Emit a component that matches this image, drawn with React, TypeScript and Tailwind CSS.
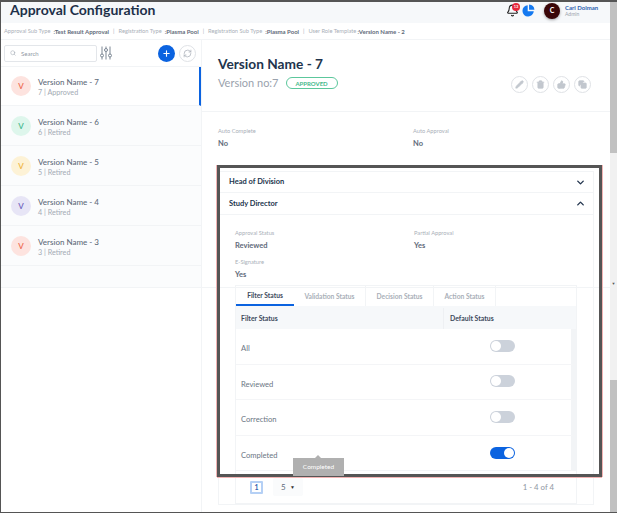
import React from 'react';
import { Search, Plus, RefreshCw, Pencil, Trash2, ThumbsUp, Copy, ChevronDown, ChevronUp, Bell } from 'lucide-react';

const versions = [
    { name: 'Version Name - 7', sub: '7 | Approved', circle: 'bg-[#fde3df] text-[#ee6a50]', active: true },
    { name: 'Version Name - 6', sub: '6 | Retired', circle: 'bg-[#def6ec] text-[#45b98c]', active: false },
    { name: 'Version Name - 5', sub: '5 | Retired', circle: 'bg-[#fdf2d6] text-[#efb53f]', active: false },
    { name: 'Version Name - 4', sub: '4 | Retired', circle: 'bg-[#e7e5f6] text-[#6f63bd]', active: false },
    { name: 'Version Name - 3', sub: '3 | Retired', circle: 'bg-[#fde3df] text-[#ee6a50]', active: false },
];

const statuses = [
    { label: 'All', on: false },
    { label: 'Reviewed', on: false },
    { label: 'Correction', on: false },
    { label: 'Completed', on: true },
];

const Field = ({ label, value, className }: { label: string; value: string; className?: string }) => (
    <div className={className}>
        <p className="text-[5.7px] leading-[10px] text-[#a9afb8]">{label}</p>
        <p className="mt-[2px] text-[7.5px] leading-[12px] font-bold text-[#5f6b7a]">{value}</p>
    </div>
);

const Toggle = ({ on }: { on: boolean }) => (
    <div className={`-mt-[1px] flex h-[12px] w-[25px] items-center rounded-full px-[1px] ${on ? 'justify-end bg-[#0b63e0]' : 'justify-start bg-[#ccd2db]'}`}>
        <div className="h-[10px] w-[10px] rounded-full bg-white" />
    </div>
);

export default function App() {
    return (
        <div className="relative flex h-[513px] w-[617px] overflow-hidden border-t-2 border-b border-l border-[#555] bg-white font-['Lato',sans-serif]">
            <div className="flex min-w-0 flex-1 flex-col">
                <header className="flex h-[21px] shrink-0 items-center bg-[#f6f8fa] pb-[4px] pl-[9px]">
                    <h1 className="-mt-[1px] text-[14px] leading-[20px] font-bold text-[#1d3049]">Approval Configuration</h1>
                    <div className="ml-auto flex items-center">
                        <div className="relative h-[14px] w-[14px]">
                            <Bell className="h-[13px] w-[13px] text-[#222]" strokeWidth={2} />
                            <span className="absolute top-[-1px] left-[6px] flex h-[8px] w-[8px] items-center justify-center rounded-full bg-[#e6283c] text-[4px] font-bold text-white">13</span>
                        </div>
                        <svg className="ml-[2px] h-[13px] w-[13px]" viewBox="0 0 24 24" fill="#1479f0">
                            <path d="M10.5 2.2a10.5 10.5 0 1 0 11.3 11.3H10.5z" />
                            <path d="M13 1v9.5h10A10.5 10.5 0 0 0 13 1z" />
                        </svg>
                        <div className="ml-[9px] flex h-[16px] w-[16px] items-center justify-center rounded-full bg-[#3a0608] text-[7px] font-bold text-white shadow-[0_1px_3px_rgba(0,0,0,0.35)]">C</div>
                        <div className="mr-[11px] ml-[5px] w-[34px]">
                            <p className="text-[6px] leading-[7px] font-bold text-[#2f5fb0]">Carl Dolman</p>
                            <p className="text-[5px] leading-[6px] text-[#9aa2ad]">Admin</p>
                        </div>
                    </div>
                </header>

                <div className="flex h-[17px] shrink-0 items-center border-b border-[#f2f4f6] pl-[3px] text-[5.7px] text-[#a9afb8]">
                    <span>Approval Sub Type</span>
                    <span className="ml-[3px] text-[6px] font-bold text-[#5f6b7a]">:Test Result Approval</span>
                    <span className="mx-[4px]">|</span>
                    <span>Registration Type</span>
                    <span className="ml-[3px] text-[6px] font-bold text-[#5f6b7a]">:Plasma Pool</span>
                    <span className="mx-[4px]">|</span>
                    <span>Registration Sub Type</span>
                    <span className="ml-[3px] text-[6px] font-bold text-[#5f6b7a]">:Plasma Pool</span>
                    <span className="mx-[4px]">|</span>
                    <span>User Role Template</span>
                    <span className="ml-[1px] text-[6px] font-bold text-[#5f6b7a]">:Version Name - 2</span>
                </div>

                <div className="flex min-h-0 flex-1">
                    <aside className="w-[201px] shrink-0 border-r border-[#f2f4f6]">
                        <div className="flex h-[27px] items-center border-b border-[#f2f4f6] pl-[3px]">
                            <div className="flex h-[17px] w-[93px] items-center rounded-[2px] border border-[#e3e6ea] pl-[5px]">
                                <Search className="h-[6px] w-[6px] text-[#9aa2ad]" />
                                <span className="ml-[5px] text-[6px] text-[#8f97a3]">Search</span>
                            </div>
                            <svg className="ml-[3px] h-[14px] w-[12px] text-[#7c8794]" viewBox="0 0 12 14" fill="none" stroke="currentColor" strokeWidth="1">
                                <path d="M2 0.5v13M6 0.5v13M10 0.5v13" />
                                <circle cx="2" cy="9.5" r="1.5" fill="#fff" />
                                <circle cx="6" cy="4" r="1.5" fill="#fff" />
                                <circle cx="10" cy="9.5" r="1.5" fill="#fff" />
                            </svg>
                            <div className="ml-[46px] flex h-[17px] w-[17px] items-center justify-center rounded-full bg-[#0b63e0]">
                                <Plus className="h-[9px] w-[9px] text-white" strokeWidth={3} />
                            </div>
                            <div className="ml-[4px] flex h-[17px] w-[17px] items-center justify-center rounded-full border border-[#dfe2e6]">
                                <RefreshCw className="h-[9px] w-[9px] text-[#a9afb8]" />
                            </div>
                        </div>
                        {versions.map(v => (
                            <div key={v.name} className={`flex items-center border-b border-[#f2f4f6] pl-[10px] ${v.active ? 'h-[39px] border-r-2 border-r-[#0b63e0] bg-white' : 'h-[40px] bg-[#fbfcfd]'}`}>
                                <div className={`flex h-[20px] w-[20px] items-center justify-center rounded-full text-[8px] font-semibold ${v.circle}`}>V</div>
                                <div className="ml-[7px] pt-[2px]">
                                    <p className="text-[8px] leading-[11px] font-medium text-[#5f6b7a]">{v.name}</p>
                                    <p className="text-[7.2px] leading-[9px] text-[#a3aab4]">{v.sub}</p>
                                </div>
                            </div>
                        ))}
                        <div className="h-[21px] bg-[#fbfcfd]" />
                    </aside>

                    <main className="min-w-0 flex-1 pl-[16px]">
                        <div className="-ml-[16px] flex h-[72px] border-b border-[#f2f4f6] pl-[16px]">
                            <div className="pt-[14px]">
                                <h2 className="text-[13.7px] leading-[19px] font-bold text-[#22344d]">Version Name - 7</h2>
                                <div className="mt-[3px] flex items-center">
                                    <span className="text-[11px] leading-[14px] text-[#9aa2ad]">Version no:7</span>
                                    <span className="ml-[7px] flex h-[12px] w-[52px] items-center justify-center rounded-full border border-[#5cc79c] text-[6px] font-bold text-[#45b98c]">APPROVED</span>
                                </div>
                            </div>
                            <div className="mt-[36px] mr-[19px] ml-auto flex gap-[4px]">
                                {[Pencil, Trash2, ThumbsUp, Copy].map((Icon, i) => (
                                    <div key={i} className="flex h-[17px] w-[17px] items-center justify-center rounded-full border border-[#dfe2e6]">
                                        <Icon className="h-[9px] w-[9px] fill-[#c2c7ce] text-[#c2c7ce]" />
                                    </div>
                                ))}
                            </div>
                        </div>

                        <div className="flex pt-[14px]">
                            <Field label="Auto Complete" value="No" className="w-[195px]" />
                            <Field label="Auto Approval" value="No" />
                        </div>

                        <div className="mt-[21px] mr-[16px] border border-[#f2f4f6]">
                            <div className="flex h-[21px] items-center justify-between border-b border-[#f2f4f6] pr-[7px] pl-[10px]">
                                <span className="text-[7.5px] font-bold text-[#22344d]">Head of Division</span>
                                <ChevronDown className="h-[11px] w-[11px] text-[#22344d]" strokeWidth={3} />
                            </div>
                            <div className="flex h-[22px] items-center justify-between border-b border-[#f2f4f6] pr-[7px] pl-[10px]">
                                <span className="text-[7.5px] font-bold text-[#22344d]">Study Director</span>
                                <ChevronUp className="h-[11px] w-[11px] text-[#22344d]" strokeWidth={3} />
                            </div>
                            <div className="px-[16px] pt-[13px]">
                                <div className="flex">
                                    <Field label="Approval Status" value="Reviewed" className="w-[179px]" />
                                    <Field label="Partial Approval" value="Yes" />
                                </div>
                                <Field label="E-Signature" value="Yes" className="mt-[5px]" />
                                <div className="relative mt-[4px] border border-[#f2f4f6] bg-white">
                                    <div className="flex h-[20px] text-[6.7px] font-bold text-[#a9afb8]">
                                        <div className="flex w-[58px] items-center justify-center border-b-2 border-[#0b63e0] text-[#3d4a5c]">Filter Status</div>
                                        <div className="flex w-[72px] items-center justify-center border-r border-[#f2f4f6]">Validation Status</div>
                                        <div className="flex w-[68px] items-center justify-center border-r border-[#f2f4f6]">Decision Status</div>
                                        <div className="flex w-[62px] items-center justify-center border-r border-[#f2f4f6]">Action Status</div>
                                    </div>
                                    <div className="flex h-[23px] items-center bg-[#f6f8fa] pt-[2px] text-[6.9px] font-bold text-[#3d4a5c]">
                                        <div className="flex h-full w-[208px] items-center border-r border-[#eef0f3] pl-[5px]">Filter Status</div>
                                        <div className="pl-[6px]">Default Status</div>
                                    </div>
                                    {statuses.map(s => (
                                        <div key={s.label} className="flex h-[35.6px] items-center border-b border-[#f4f5f7] border-r-[5px] border-r-[#f2f4f6]">
                                            <span className="mt-[5px] w-[254px] pl-[5px] text-[7.6px] text-[#6b7684]">{s.label}</span>
                                            <Toggle on={s.on} />
                                        </div>
                                    ))}
                                    <div className="flex h-[32px] items-center pr-[22px] pl-[14px]">
                                        <span className="flex h-[13px] w-[13px] items-center justify-center rounded-[1px] border-2 border-[#b5d0f5] text-[7px] font-bold text-[#2f5fb0]">1</span>
                                        <div className="ml-[10px] flex h-[18px] w-[30px] items-center justify-between rounded-[2px] bg-[#fafbfc] px-[8px] text-[8px] text-[#5f6b7a]">
                                            <span>5</span>
                                            <span className="text-[5px] text-[#333]">▼</span>
                                        </div>
                                        <span className="ml-auto text-[7.8px] text-[#8f97a3]">1 - 4 of 4</span>
                                    </div>
                                </div>
                            </div>
                        </div>
                    </main>
                </div>
            </div>

            <div className="flex w-[7px] shrink-0 flex-col bg-[#f1f1f1]">
                <div className="h-[151px] bg-[#c1c1c1]" />
                <div className="mt-[128px] text-center text-[4px] leading-[6px] text-[#555]">▼</div>
                <div className="mt-[93px] flex-1 bg-[#c1c1c1]" />
            </div>

            {/* seam of the captured screen, runs behind the tab card */}
            <div className="absolute top-[285px] left-0 h-px w-[610px] bg-[#f2f4f6]" />

            {/* focus frame drawn over the screenshot */}
            <div className="pointer-events-none absolute top-[163px] left-[216px] h-[312px] w-[385px] border-[3px] border-[#555] shadow-[-1px_0_0_#f3b4b4,1px_0_0_#f3b4b4,0_1px_0_#f3b4b4]" />

            {/* tooltip on the Completed row */}
            <div className="absolute top-[456px] left-[292px] flex h-[18px] w-[51px] items-center justify-center bg-[#b0b0b0] text-[6.5px] text-white">
                <span className="absolute top-[-3px] left-[22px] h-0 w-0 border-x-[3px] border-b-[3px] border-x-transparent border-b-[#b0b0b0]" />
                Completed
            </div>
        </div>
    );
}
